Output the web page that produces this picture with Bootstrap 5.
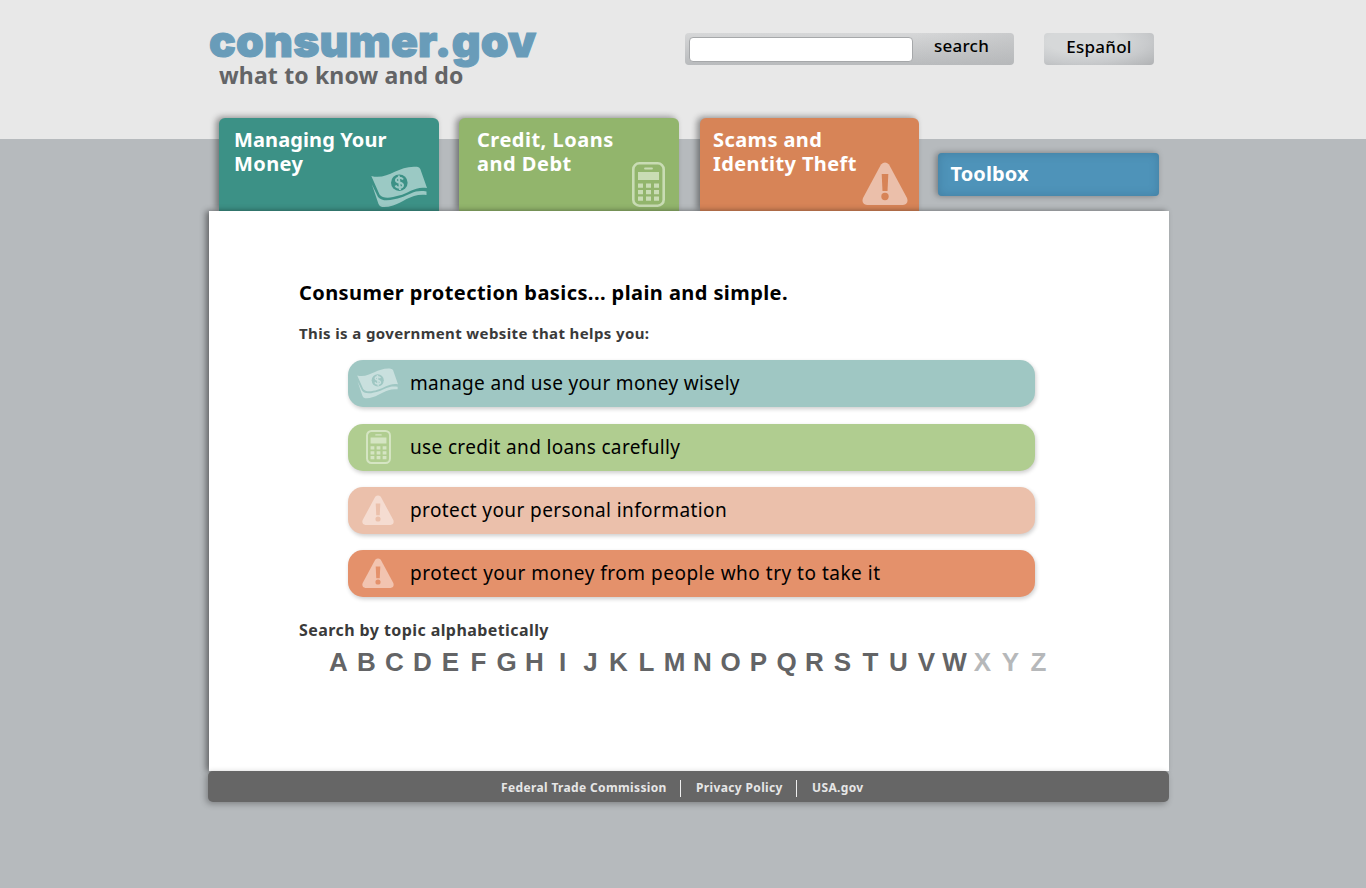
<!DOCTYPE html>
<html lang="en">
<head>
<meta charset="utf-8">
<meta name="viewport" content="width=device-width, initial-scale=1">
<title>consumer.gov</title>
<link href="https://cdn.jsdelivr.net/npm/bootstrap@5.3.0/dist/css/bootstrap.min.css" rel="stylesheet">
<style>
body{font-family:"Noto Sans","Open Sans",sans-serif;background:linear-gradient(#e8e8e8 139px,#b6babd 139px) no-repeat #b6babd;color:#000;white-space:nowrap;min-height:100vh}
a{color:inherit;text-decoration:none}
.site{width:960px;margin-left:209px}
.masthead{height:118px}
.brand{padding-top:20px;width:476px}
.brand-name{font-family:Inter,"Noto Sans",sans-serif;font-size:44.5px;line-height:43px;font-weight:900;color:#699cb9;letter-spacing:.22px;-webkit-text-stroke:1.2px #699cb9}
.tagline{font-size:23px;line-height:24px;font-weight:700;color:#636466;letter-spacing:.15px;padding-left:10px}
.silver{background:radial-gradient(ellipse at 35% 25%,#d6d8d9 35%,#c8cacc 65%,#b0b2b4 100%);border-radius:4px;height:32px;margin-top:33px;font-size:17px;font-weight:500;letter-spacing:.25px;line-height:28px}
.search-box{width:329px;padding:4px;background:linear-gradient(90deg,transparent 70%,#b0b2b455),linear-gradient(#d6d7d8,#b9bbbd)}
.search-box input{width:224px;height:25px;border:1px solid #a6a8aa;border-radius:4px;background:#fff;outline:0;padding:0 6px}
.search-box button{border:0;background:none;width:97px;height:24px;line-height:18px;padding:0 0 6px;font-weight:500;letter-spacing:.25px}
.lang{width:110px;margin-left:30px}
.tabs{height:93px;padding-left:10px}
.tab{width:220px;height:93px;border-radius:6px 6px 0 0;color:#fff;font-size:20px;line-height:24px;font-weight:700;letter-spacing:.4px;padding-top:10px;box-shadow:-3px -1px 6px rgba(0,0,0,.4)}
.tab svg{position:absolute}
.t-money{background:#3c9186;--hole:#3c9186;padding-left:15px}
.t-credit{background:#92b56c;--hole:#92b56c;margin-left:20px;padding-left:18px;letter-spacing:.5px}
.t-scam{background:#d78457;--hole:#d78457;margin-left:21px;width:219px;padding-left:13px}
.toolbox{width:221px;height:43px;margin:35px 0 0 19px;border-radius:4px;background:#4e93b9;color:#fff;font-size:20px;line-height:42px;font-weight:700;padding-left:12.5px;letter-spacing:.1px;box-shadow:-2px 0 6px rgba(0,0,0,.35),inset 0 0 10px rgba(50,95,125,.4)}
.sheet{height:560px;padding:70px 0 0 90px;background:#fff;box-shadow:-3px 0 6px rgba(0,0,0,.45)}
.sheet h1{font-size:20px;line-height:24px;font-weight:700;letter-spacing:.42px;margin:0 0 18px}
.sheet h2{font-size:15px;line-height:20px;font-weight:700;letter-spacing:.38px;color:#3a3a3a;margin:0 0 17px}
.bars{margin-left:49px;width:687px}
.bar{height:47px;border-radius:15px;margin-bottom:16px;font-size:19px;letter-spacing:.4px;box-shadow:1px 2px 4px rgba(0,0,0,.2)}
.bar .glyph{width:62px;padding-right:3px}
.bar svg{margin-bottom:1px}
.b1{background:#9fc7c3;--hole:#9fc7c3;margin-bottom:17px;letter-spacing:.32px}
.b2{background:#b0cd90;--hole:#b0cd90;letter-spacing:.35px}
.b2 .glyph{padding-right:1px}
.b3{background:#ebc0ab;--hole:#ebc0ab}
.b4{background:#e4916b;--hole:#e4916b;letter-spacing:.5px}
.sheet h3{font-size:16px;line-height:20px;font-weight:700;letter-spacing:.42px;color:#3a3a3a;margin:23px 0 8px}
.letters{margin-left:25.5px;font:700 26px/28px "Liberation Sans",Arial,sans-serif;color:#636466}
.letters>*{width:28px}
.letters span{color:#b6b8ba}
.foot{height:31px;margin-left:-1px;background:#666;border-radius:5px;color:#e6e6e6;font-size:12px;font-weight:700;letter-spacing:.36px;padding:0 0 0 293px;box-shadow:-2px 2px 6px rgba(0,0,0,.3)}
.foot i{width:1px;height:17px;background:#eee;margin-top:3px}
.foot a{line-height:30px;padding-top:2px}
</style>
</head>
<body>
<svg width="0" height="0" class="position-absolute" aria-hidden="true">
  <symbol id="bill" viewBox="0 0 56 42">
    <path fill="currentColor" d="M.3 10C17 14.500 27-1 46 .8Q48.500 1.200 49.300 3L56 22C44 20 38 27 28 29.500C20 32 12 33 8.500 28.500Z"/>
    <path fill="currentColor" d="M.7 18L7 31C12 37 23 33.500 30 31.500C40 28 44 23.500 55.500 25.500V29C41 27 32 36.500 22 39.500Q16 41.500 11 41Q8.500 40.500 7.500 38Z"/>
    <circle cx="28.300" cy="16.700" r="8.300" fill="var(--hole)"/>
    <path d="M32 13.500C30 10.500 24.500 11.500 25 14.500C25.500 17.500 31.500 15.500 32 19C32.300 22.500 26 22.500 24.500 19.500M27.800 9.500L29 24" fill="none" stroke="currentColor" stroke-width="2"/>
  </symbol>
  <symbol id="calc" viewBox="0 0 33 45">
    <rect x="1.300" y="1.300" width="30.400" height="42.400" rx="6" fill="none" stroke="currentColor" stroke-width="2.600"/>
    <path stroke="currentColor" stroke-width="1.800" stroke-linecap="round" d="M13 6.500h7"/>
    <path fill="currentColor" d="M6 10h21v8H6zM6 21.500h5v4.300H6zM14 21.500h5v4.300h-5zM22 21.500h5v4.300h-5zM6 28h5v4.300H6zM14 28h5v4.300h-5zM22 28h5v4.300h-5zM6 34.500h5v4.300H6zM14 34.500h5v4.300h-5zM22 34.500h5v4.300h-5z"/>
  </symbol>
  <symbol id="warn" viewBox="0 0 46 43">
    <path fill="currentColor" d="M19 2.500Q23-1.500 27 2.500L45 36Q47 42 41 43H5Q-1 42 1 36Z"/>
    <path fill="var(--hole)" d="M19.700 12h6.600l-.8 17h-5z"/><circle cx="23" cy="34.500" r="3.700" fill="var(--hole)"/>
  </symbol>
</svg>
<div class="site">
  <header class="masthead d-flex align-items-start">
    <div class="brand"><div class="brand-name">consumer.gov</div><div class="tagline">what to know and do</div></div>
    <form class="silver search-box d-flex"><input type="text" aria-label="Search"><button type="button">search</button></form>
    <a href="#" class="silver lang text-center">Español</a>
  </header>
  <nav class="tabs d-flex align-items-start">
    <a href="#" class="tab t-money position-relative"><span style="letter-spacing:.1px">Managing Your</span><br>Money
      <svg width="56" height="42" style="left:152px;top:48px;color:#9bc9c4"><use href="#bill"/></svg></a>
    <a href="#" class="tab t-credit position-relative">Credit, Loans<br>and Debt
      <svg width="33" height="45" style="left:173px;top:44px;color:#c9dcb4"><use href="#calc"/></svg></a>
    <a href="#" class="tab t-scam position-relative">Scams and<br>Identity Theft
      <svg width="46" height="43" style="left:162px;top:44px;color:#ebbfaa"><use href="#warn"/></svg></a>
    <a href="#" class="toolbox">Toolbox</a>
  </nav>
  <main class="sheet position-relative">
    <h1>Consumer protection basics... plain and simple.</h1>
    <h2>This is a government website that helps you:</h2>
    <div class="bars">
      <a href="#" class="bar b1 d-flex align-items-center"><span class="glyph d-flex justify-content-center"><svg width="41" height="31" style="color:#c9e0de"><use href="#bill"/></svg></span>manage and use your money wisely</a>
      <a href="#" class="bar b2 d-flex align-items-center"><span class="glyph d-flex justify-content-center"><svg width="25" height="34" style="color:#d5e5c3"><use href="#calc"/></svg></span>use credit and loans carefully</a>
      <a href="#" class="bar b3 d-flex align-items-center"><span class="glyph d-flex justify-content-center"><svg width="32" height="30" style="color:#f5dcd1"><use href="#warn"/></svg></span>protect your personal information</a>
      <a href="#" class="bar b4 d-flex align-items-center mb-0"><span class="glyph d-flex justify-content-center"><svg width="32" height="30" style="color:#f2c4b0"><use href="#warn"/></svg></span>protect your money from people who try to take it</a>
    </div>
    <h3>Search by topic alphabetically</h3>
    <div class="letters d-flex text-center">
      <a href="#">A</a><a href="#">B</a><a href="#">C</a><a href="#">D</a><a href="#">E</a><a href="#">F</a><a href="#">G</a><a href="#">H</a><a href="#">I</a><a href="#">J</a><a href="#">K</a><a href="#">L</a><a href="#">M</a><a href="#">N</a><a href="#">O</a><a href="#">P</a><a href="#">Q</a><a href="#">R</a><a href="#">S</a><a href="#">T</a><a href="#">U</a><a href="#">V</a><a href="#">W</a><span>X</span><span>Y</span><span>Z</span>
    </div>
  </main>
  <footer class="foot d-flex align-items-center position-relative"><a href="#" style="width:172px">Federal Trade Commission</a><i style="margin-left:7px"></i><a href="#" style="margin-left:15px;width:90px">Privacy Policy</a><i style="margin-left:10px"></i><a href="#" style="margin-left:15px">USA.gov</a></footer>
</div>
<script src="https://cdn.jsdelivr.net/npm/bootstrap@5.3.0/dist/js/bootstrap.bundle.min.js"></script>
</body>
</html>
